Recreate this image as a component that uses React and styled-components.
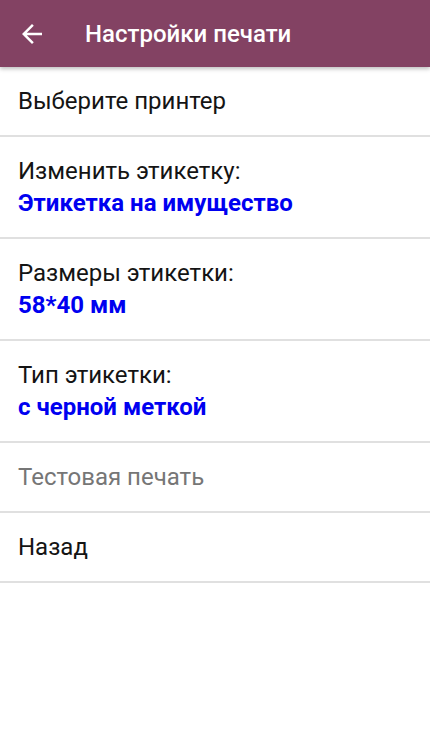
import React from 'react';
import styled, { createGlobalStyle } from 'styled-components';

const GlobalStyle = createGlobalStyle`
  html, body {
    margin: 0;
    padding: 0;
    background: #fff;
    font-family: Roboto, "Noto Sans", sans-serif;
  }
`;

const Page = styled.div`
  width: 430px;
  min-height: 739px;
  background: #fff;
`;

const Toolbar = styled.header`
  display: flex;
  align-items: center;
  height: 67px;
  padding-left: 17px;
  background-color: #834263;
  color: #fff;
  box-shadow: 0 2px 4px rgba(0, 0, 0, 0.25);
  position: relative;
  z-index: 1;
  box-sizing: border-box;
`;

const BackButton = styled.button`
  display: flex;
  align-items: center;
  justify-content: center;
  width: 30px;
  height: 30px;
  padding: 0;
  border: 0;
  background: none;
  color: #fff;
  cursor: pointer;
`;

const Title = styled.h1`
  margin: 0 0 0 38px;
  font-size: 24px;
  font-weight: 500;
`;

const Menu = styled.ul`
  list-style: none;
  margin: 0;
  padding: 0;
`;

const Item = styled.li`
  padding: 18px 18px;
  border-bottom: 2px solid #e0e0e0;
  font-size: 24px;
  line-height: 32px;
  color: ${props => (props.disabled ? '#767676' : '#141414')};
`;

const Value = styled.div`
  color: #0000f0;
  font-weight: 700;
`;

const ArrowBack = () => (
  <svg width="30" height="30" viewBox="0 0 24 24" fill="currentColor">
    <path d="M20 11H7.83l5.59-5.59L12 4l-8 8 8 8 1.41-1.41L7.83 13H20v-2z" />
  </svg>
);

const items = [
  { label: 'Выберите принтер' },
  { label: 'Изменить этикетку:', value: 'Этикетка на имущество' },
  { label: 'Размеры этикетки:', value: '58*40 мм' },
  { label: 'Тип этикетки:', value: 'с черной меткой' },
  { label: 'Тестовая печать', disabled: true },
  { label: 'Назад' },
];

const App = () => (
  <Page>
    <GlobalStyle />
    <Toolbar>
      <BackButton aria-label="Назад">
        <ArrowBack />
      </BackButton>
      <Title>Настройки печати</Title>
    </Toolbar>
    <Menu>
      {items.map(item => (
        <Item key={item.label} disabled={item.disabled}>
          {item.label}
          {item.value && <Value>{item.value}</Value>}
        </Item>
      ))}
    </Menu>
  </Page>
);

export default App;
